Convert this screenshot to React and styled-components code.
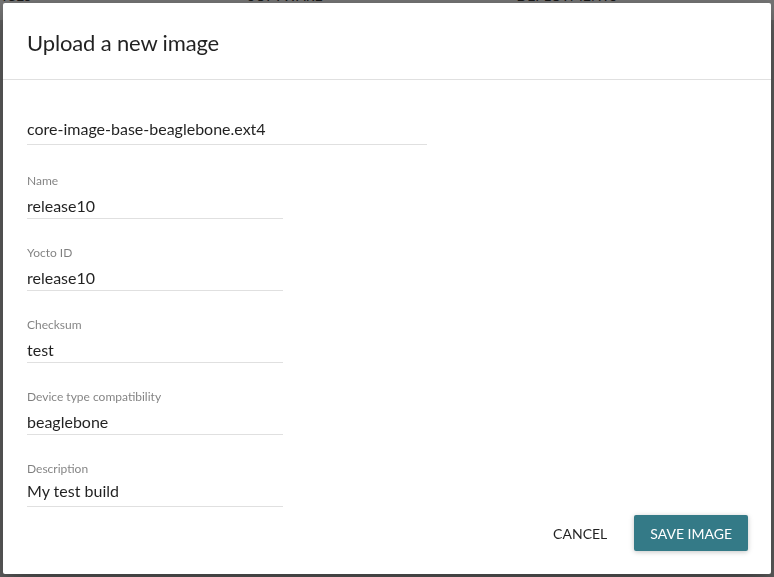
import { createGlobalStyle, styled } from "styled-components";

const GlobalStyle = createGlobalStyle`
  html, body {
    margin: 0;
    padding: 0;
    height: 100%;
    overflow: hidden;
  }
  body {
    font-family: Lato, "Open Sans", "Liberation Sans", sans-serif;
    background: #d6d6d6;
  }
`;

const fields = [
  { label: "Name", value: "release10" },
  { label: "Yocto ID", value: "release10" },
  { label: "Checksum", value: "test" },
  { label: "Device type compatibility", value: "beaglebone" },
  { label: "Description", value: "My test build", multiline: true },
];

const App = () => {
  return (
    <>
      <GlobalStyle />
      <Page>
        <Header>
          <Tab>Devices</Tab>
          <Tab>Software</Tab>
          <Tab>Deployments</Tab>
        </Header>
      </Page>
      <Overlay>
        <Dialog>
          <Title>Upload a new image</Title>
          <Body>
            <FileName>core-image-base-beaglebone.ext4</FileName>
            {fields.map((f) => (
              <Field key={f.label} $multiline={f.multiline}>
                <Label>{f.label}</Label>
                <Value $multiline={f.multiline}>{f.value}</Value>
              </Field>
            ))}
          </Body>
          <Actions>
            <FlatButton>Cancel</FlatButton>
            <RaisedButton>Save image</RaisedButton>
          </Actions>
        </Dialog>
      </Overlay>
    </>
  );
};

export default App;

const Page = styled.div`
  height: 100vh;
`;

const Header = styled.div`
  height: 20px;
  background: #fff;
  display: grid;
  grid-template-columns: repeat(3, 282px);
  margin-left: -138px;
  overflow: hidden;
`;

const Tab = styled.div`
  margin-top: -12px;
  text-align: center;
  font-size: 14px;
  line-height: 16px;
  text-transform: uppercase;
  color: #333;
`;

const Overlay = styled.div`
  position: fixed;
  inset: 0;
  background: rgba(0, 0, 0, 0.54);
  padding: 3px;
  display: flex;
`;

const Dialog = styled.div`
  flex: 1;
  background: #fff;
  border-radius: 2px;
  box-shadow: 0 14px 45px rgba(0, 0, 0, 0.25), 0 10px 18px rgba(0, 0, 0, 0.22);
  display: flex;
  flex-direction: column;
`;

const Title = styled.h3`
  margin: 0;
  padding: 24px 24px 20px;
  font-size: 22px;
  line-height: 32px;
  font-weight: 400;
  letter-spacing: -0.15px;
  color: rgba(0, 0, 0, 0.87);
  border-bottom: 1px solid #e0e0e0;
`;

const Body = styled.div`
  flex: 1;
  padding: 37px 24px 0;
  display: flex;
  flex-direction: column;
  gap: 26px;
`;

const FileName = styled.div`
  width: 400px;
  font-size: 16px;
  line-height: 24px;
  padding-bottom: 3px;
  margin-bottom: 2px;
  color: rgba(0, 0, 0, 0.87);
  border-bottom: 1px solid #e0e0e0;
`;

const Field = styled.div`
  width: 256px;
  display: flex;
  flex-direction: column;
  gap: ${(p) => (p.$multiline ? "2px" : "5px")};
  border-bottom: 1px solid #e0e0e0;
`;

const Label = styled.div`
  font-size: 12px;
  line-height: 16px;
  color: rgba(0, 0, 0, 0.5);
`;

const Value = styled.div`
  font-size: 16px;
  line-height: 24px;
  padding-bottom: ${(p) => (p.$multiline ? "3px" : "0")};
  color: rgba(0, 0, 0, 0.87);
`;

const Actions = styled.div`
  display: flex;
  justify-content: flex-end;
  align-items: center;
  gap: 11px;
  padding: 0 23px 23px;
`;

const FlatButton = styled.button`
  height: 36px;
  padding: 0 16px;
  border: none;
  background: transparent;
  font-family: inherit;
  font-size: 14px;
  text-transform: uppercase;
  color: rgba(0, 0, 0, 0.87);
  cursor: pointer;
`;

const RaisedButton = styled(FlatButton)`
  background: #347a87;
  color: #fff;
  border-radius: 2px;
  box-shadow: 0 1px 6px rgba(0, 0, 0, 0.12), 0 1px 4px rgba(0, 0, 0, 0.12);
`;
